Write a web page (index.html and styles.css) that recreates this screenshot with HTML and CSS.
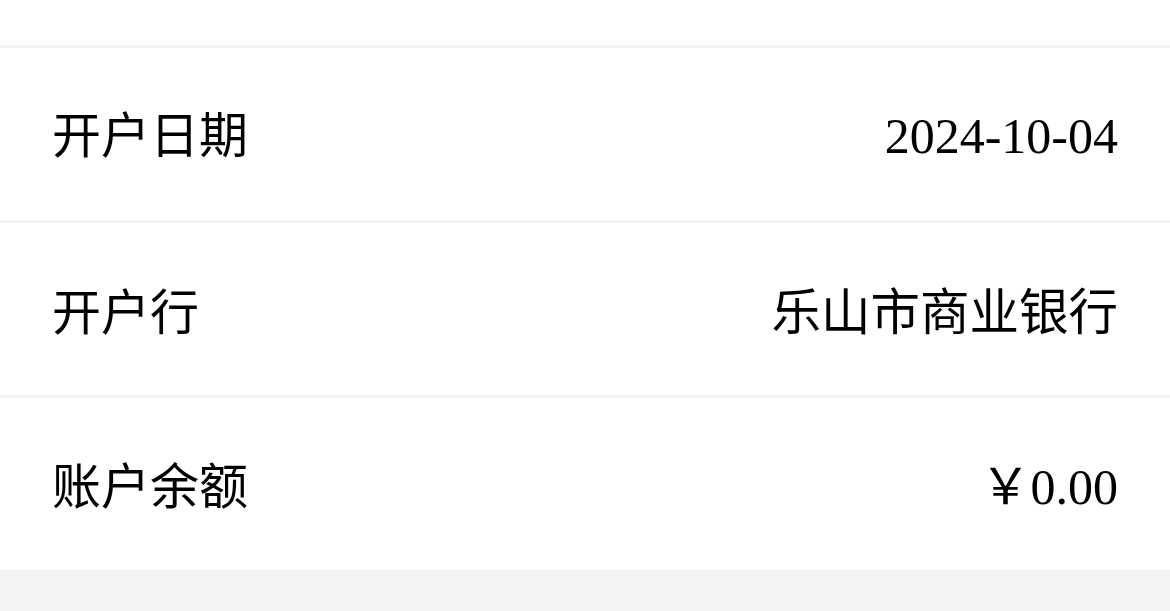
FILE: index.html
```html
<!DOCTYPE html>
<html lang="zh-CN">
<head>
<meta charset="utf-8">
<link rel="stylesheet" href="styles.css">
</head>
<body>
<div class="page">
  <div class="top"></div>
  <div class="row">
    <div class="line">
      <span class="label">开户日期</span>
      <span class="value">2024-10-04</span>
    </div>
  </div>
  <div class="row">
    <div class="line">
      <span class="label">开户行</span>
      <span class="value cjk">乐山市商业银行</span>
    </div>
  </div>
  <div class="row">
    <div class="line">
      <span class="label">账户余额</span>
      <span class="value"><span class="yen">￥</span>0.00</span>
    </div>
  </div>
  <div class="footer"></div>
</div>
</body>
</html>
```
FILE: styles.css
```css
html, body {
  margin: 0;
  padding: 0;
  background: #ffffff;
}
.page {
  width: 1170px;
  height: 611px;
  display: flex;
  flex-direction: column;
  overflow: hidden;
}
.top {
  height: 45px;
  flex: none;
}
.row {
  height: 172px;
  flex: none;
  border-top: 3px solid #f3f3f3;
  display: flex;
  align-items: center;
  padding: 0 52px;
  color: #000;
}
.line {
  flex: 1;
  display: flex;
  justify-content: space-between;
  align-items: baseline;
  line-height: 1.2;
}
.label {
  font-family: "Noto Sans CJK SC", sans-serif;
  font-size: 49px;
}
.value {
  font-family: "Liberation Serif", "Noto Sans CJK SC", serif;
  font-size: 50px;
}
.value.cjk {
  font-family: "Noto Sans CJK SC", sans-serif;
  font-size: 49.5px;
}
.yen {
  font-family: "Noto Sans CJK SC", sans-serif;
}
.footer {
  flex: 1;
  background: #f4f4f4;
}
```
